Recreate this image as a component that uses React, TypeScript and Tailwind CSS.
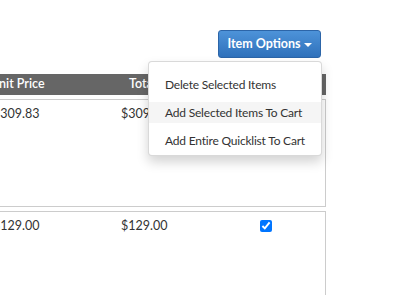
import React from "react";

export default function App() {
  return (
    <div className="relative w-[394px] h-[295px] overflow-hidden bg-white" style={{ fontFamily: "Lato, 'Open Sans', sans-serif" }}>
      <div className="flex justify-end pr-[73px] pt-[30px]">
        <button className="flex h-[28px] w-[103px] items-center justify-center gap-[3px] rounded-[3px] border border-[#2c65a8] bg-gradient-to-b from-[#4d93d9] to-[#2f71bb] text-[12.5px] font-bold text-white whitespace-nowrap">
          Item Options
          <span className="mt-[2px] h-0 w-0 border-x-[4px] border-t-[4px] border-x-transparent border-t-white" />
        </button>
      </div>

      <div className="ml-[-40px] mt-[16px] w-[366px]">
        <div className="flex h-[21px] items-center bg-[#666666] text-[12.5px] font-semibold text-white whitespace-nowrap">
          <span className="ml-[30px] w-[139px]">Unit Price</span>
          <span>Total</span>
        </div>
        <div className="mt-[4px] h-[108px] border border-[#cccccc] text-[12.5px] text-[#333333] whitespace-nowrap">
          <div className="flex pt-[5px]">
            <span className="ml-[32px] w-[128px]">$309.83</span>
            <span>$309.83</span>
          </div>
        </div>
        <div className="mt-[4px] h-[100px] border border-[#cccccc] text-[12.5px] text-[#333333] whitespace-nowrap">
          <div className="flex items-center pt-[5px]">
            <span className="ml-[32px] w-[128px]">$129.00</span>
            <span className="w-[139px]">$129.00</span>
            <input type="checkbox" defaultChecked className="m-0 h-[12px] w-[12px]" />
          </div>
        </div>
      </div>

      <div className="absolute left-[148px] top-[61px] flex w-[174px] flex-col gap-[7px] rounded-[4px] border border-[rgba(0,0,0,0.15)] bg-white pb-[4px] pt-[12px] text-[12px] tracking-[-0.2px] text-[#333333] shadow-[0_6px_12px_rgba(0,0,0,0.175)] whitespace-nowrap">
        <div className="flex h-[21px] items-center pl-[16px]">Delete Selected Items</div>
        <div className="flex h-[21px] items-center bg-[#f5f5f5] pl-[16px]">Add Selected Items To Cart</div>
        <div className="flex h-[21px] items-center pl-[16px]">Add Entire Quicklist To Cart</div>
      </div>
    </div>
  );
}
